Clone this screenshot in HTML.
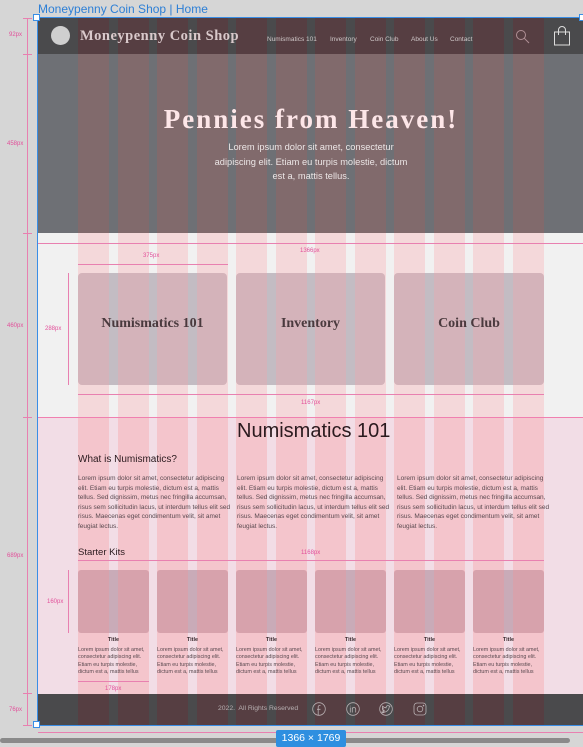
<!DOCTYPE html>
<html><head><meta charset="utf-8">
<style>
*{margin:0;padding:0;box-sizing:border-box}
body{width:583px;height:747px;overflow:hidden;background:#d6d6d6;position:relative;font-family:"Liberation Sans",sans-serif}
.a{position:absolute}
.serif{font-family:"Liberation Serif",serif;font-weight:bold}
.t{position:absolute;white-space:nowrap}
.m{color:#e2509a;font-size:6px;position:absolute}
.cols{position:absolute;left:0;top:0;width:583px;height:100%;pointer-events:none}
.cols div{position:absolute;top:0;height:100%;width:31px}
.para{position:absolute;width:154px;font-size:6.5px;line-height:9.6px;color:#5a4a50}
.kit{position:absolute;top:570px;width:71px;height:63px;background:#c9abb8;border-radius:3px}
.kt{position:absolute;top:637px;width:71px;text-align:center;font-size:5.5px;font-weight:bold;color:#3a2a2e}
.kp{position:absolute;top:647px;width:76px;font-size:5.4px;line-height:7.3px;color:#5a4a50}
</style></head><body>

<div class="t" style="left:38px;top:2px;font-size:12px;color:#2d7fd6">Moneypenny Coin Shop | Home</div>

<div class="a" style="left:38px;top:18px;width:545px;height:36px;background:#4a4a4c"></div>
<div class="a" style="left:38px;top:54px;width:545px;height:179px;background:#6e7075"></div>
<div class="a" style="left:38px;top:233px;width:545px;height:184px;background:#f1f1f1"></div>
<div class="a" style="left:38px;top:417px;width:545px;height:277px;background:#f2dde6"></div>
<div class="a" style="left:38px;top:694px;width:545px;height:31px;background:#4a4a4c"></div>

<div class="a" style="left:78px;top:273px;width:149px;height:112px;background:#c3bcc3;border-radius:4px"></div>
<div class="a" style="left:236px;top:273px;width:149px;height:112px;background:#c3bcc3;border-radius:4px"></div>
<div class="a" style="left:394px;top:273px;width:150px;height:112px;background:#c3bcc3;border-radius:4px"></div>

<div class="kit" style="left:78px"></div><div class="kit" style="left:157px"></div><div class="kit" style="left:236px"></div>
<div class="kit" style="left:315px"></div><div class="kit" style="left:394px"></div><div class="kit" style="left:473px"></div>

<div class="a" style="left:0;top:18px;width:583px;height:36px;overflow:hidden"><div class="cols" id="c1"></div></div>
<div class="a" style="left:0;top:54px;width:583px;height:179px;overflow:hidden"><div class="cols" id="c2"></div></div>
<div class="a" style="left:0;top:233px;width:583px;height:184px;overflow:hidden"><div class="cols" id="c3"></div></div>
<div class="a" style="left:0;top:417px;width:583px;height:277px;overflow:hidden"><div class="cols" id="c4"></div></div>
<div class="a" style="left:0;top:694px;width:583px;height:31px;overflow:hidden"><div class="cols" id="c5"></div></div>

<div class="a" style="left:51px;top:26px;width:19px;height:19px;border-radius:50%;background:#cfcfcf"></div>
<div class="t serif" style="left:80px;top:28px;font-size:14.5px;color:#d9c9cb;letter-spacing:.5px">Moneypenny Coin Shop</div>
<div class="t" style="left:267px;top:36px;font-size:6.5px;color:#cfc7c8">Numismatics 101</div>
<div class="t" style="left:330px;top:36px;font-size:6.5px;color:#cfc7c8">Inventory</div>
<div class="t" style="left:370px;top:36px;font-size:6.5px;color:#cfc7c8">Coin Club</div>
<div class="t" style="left:411px;top:36px;font-size:6.5px;color:#cfc7c8">About Us</div>
<div class="t" style="left:450px;top:36px;font-size:6.5px;color:#cfc7c8">Contact</div>
<svg class="a" style="left:514px;top:28px" width="18" height="18"><circle cx="7" cy="7" r="4.5" fill="none" stroke="#b09096" stroke-width="1"/><path d="M10.2 10.2L15 15" stroke="#b09096" stroke-width="1"/></svg>
<svg class="a" style="left:552px;top:24px" width="20" height="23"><path d="M2.5 8H17.5L17.5 21H2.5Z" fill="none" stroke="#ddd" stroke-width="1"/><path d="M6.5 11V6a3.5 3.5 0 0 1 7 0V11" fill="none" stroke="#ddd" stroke-width="1"/></svg>

<div class="t serif" style="left:60px;width:502px;text-align:center;top:104px;font-size:27px;color:#fde6e8;letter-spacing:2px">Pennies from Heaven!</div>
<div class="a" style="left:208px;width:206px;top:140px;text-align:center;font-size:9.3px;line-height:14.5px;color:#ece6e6">Lorem ipsum dolor sit amet, consectetur adipiscing elit. Etiam eu turpis molestie, dictum est a, mattis tellus.</div>

<div class="t serif" style="left:78px;width:149px;text-align:center;top:316px;font-size:14px;color:#4a3a3e">Numismatics 101</div>
<div class="t serif" style="left:236px;width:149px;text-align:center;top:316px;font-size:14px;color:#4a3a3e">Inventory</div>
<div class="t serif" style="left:394px;width:150px;text-align:center;top:316px;font-size:14px;color:#4a3a3e">Coin Club</div>

<div class="t" style="left:237px;top:420px;font-size:20px;color:#2a1a1e">Numismatics 101</div>
<div class="t" style="left:78px;top:454px;font-size:10px;color:#2a1a1e">What is Numismatics?</div>
<div class="para" style="left:78px;top:474px">Lorem ipsum dolor sit amet, consectetur adipiscing elit. Etiam eu turpis molestie, dictum est a, mattis tellus. Sed dignissim, metus nec fringilla accumsan, risus sem sollicitudin lacus, ut interdum tellus elit sed risus. Maecenas eget condimentum velit, sit amet feugiat lectus.</div>
<div class="para" style="left:237px;top:474px">Lorem ipsum dolor sit amet, consectetur adipiscing elit. Etiam eu turpis molestie, dictum est a, mattis tellus. Sed dignissim, metus nec fringilla accumsan, risus sem sollicitudin lacus, ut interdum tellus elit sed risus. Maecenas eget condimentum velit, sit amet feugiat lectus.</div>
<div class="para" style="left:397px;top:474px">Lorem ipsum dolor sit amet, consectetur adipiscing elit. Etiam eu turpis molestie, dictum est a, mattis tellus. Sed dignissim, metus nec fringilla accumsan, risus sem sollicitudin lacus, ut interdum tellus elit sed risus. Maecenas eget condimentum velit, sit amet feugiat lectus.</div>
<div class="t" style="left:78px;top:547px;font-size:9.5px;color:#2a1a1e">Starter Kits</div>

<div class="kt" style="left:78px">Title</div><div class="kt" style="left:157px">Title</div><div class="kt" style="left:236px">Title</div><div class="kt" style="left:315px">Title</div><div class="kt" style="left:394px">Title</div><div class="kt" style="left:473px">Title</div>
<div class="kp" style="left:78px">Lorem ipsum dolor sit amet, consectetur adipiscing elit. Etiam eu turpis molestie, dictum est a, mattis tellus</div>
<div class="kp" style="left:157px">Lorem ipsum dolor sit amet, consectetur adipiscing elit. Etiam eu turpis molestie, dictum est a, mattis tellus</div>
<div class="kp" style="left:236px">Lorem ipsum dolor sit amet, consectetur adipiscing elit. Etiam eu turpis molestie, dictum est a, mattis tellus</div>
<div class="kp" style="left:315px">Lorem ipsum dolor sit amet, consectetur adipiscing elit. Etiam eu turpis molestie, dictum est a, mattis tellus</div>
<div class="kp" style="left:394px">Lorem ipsum dolor sit amet, consectetur adipiscing elit. Etiam eu turpis molestie, dictum est a, mattis tellus</div>
<div class="kp" style="left:473px">Lorem ipsum dolor sit amet, consectetur adipiscing elit. Etiam eu turpis molestie, dictum est a, mattis tellus</div>

<div class="t" style="left:218px;top:705px;font-size:6.8px;color:#b8b0b2">2022.&nbsp; All Rights Reserved</div>
<svg class="a" style="left:310px;top:700px" width="120" height="18" fill="none" stroke="#b8b0b2" stroke-width=".8">
<circle cx="9" cy="9" r="6.3"/><path d="M10.5 5.5h-1a1.3 1.3 0 0 0-1.3 1.3V15M7 9.3h3.5"/>
<circle cx="43" cy="9" r="6.3"/><path d="M40.3 7.5V12.5M40.3 5.8v.6M42.3 12.5V7.5M42.3 9.3q0-1.8 1.7-1.8t1.7 1.8V12.5"/>
<circle cx="76" cy="9" r="6.3"/><path d="M72 11.8q3 1 5-.7t2.3-4.3l1-.8-1 .2q-1-1-2.2-.4t-1 2q-2 0-3.5-1.6q-.6 1.6.8 2.7-.7 0-1-.3 0 1.5 1.7 2-.5.2-1 0 .5 1.2 1.8 1.3-1.3 1-2.9.9z"/>
<rect x="104" y="3" width="12" height="12" rx="3"/><circle cx="110" cy="9" r="2.8"/><circle cx="113.5" cy="5.6" r=".4"/>
</svg>

<div class="a" style="left:37px;top:17px;width:1px;height:708px;background:#3a8ee6"></div>
<div class="a" style="left:37px;top:17px;width:546px;height:1px;background:#3a8ee6"></div>
<div class="a" style="left:37px;top:725px;width:546px;height:1px;background:#3a8ee6"></div>
<div class="a" style="left:33px;top:14px;width:7px;height:7px;background:#fff;border:1px solid #3a8ee6"></div>
<div class="a" style="left:579px;top:14px;width:7px;height:7px;background:#fff;border:1px solid #3a8ee6"></div>
<div class="a" style="left:33px;top:721px;width:7px;height:7px;background:#fff;border:1px solid #3a8ee6"></div>

<div class="a" style="left:27px;top:18px;width:1px;height:707px;background:#e880b0"></div>
<div class="a" style="left:23px;top:18px;width:9px;height:1px;background:#e880b0"></div>
<div class="a" style="left:23px;top:54px;width:9px;height:1px;background:#e880b0"></div>
<div class="a" style="left:23px;top:233px;width:9px;height:1px;background:#e880b0"></div>
<div class="a" style="left:23px;top:417px;width:9px;height:1px;background:#e880b0"></div>
<div class="a" style="left:23px;top:693px;width:9px;height:1px;background:#e880b0"></div>
<div class="a" style="left:23px;top:725px;width:9px;height:1px;background:#e880b0"></div>
<div class="m" style="left:9px;top:32px">92px</div>
<div class="m" style="left:7px;top:141px">458px</div>
<div class="m" style="left:7px;top:323px">460px</div>
<div class="m" style="left:7px;top:553px">689px</div>
<div class="m" style="left:9px;top:707px">76px</div>

<div class="a" style="left:38px;top:243px;width:545px;height:1px;background:#e880b0"></div>
<div class="m" style="left:300px;top:248px">1366px</div>
<div class="a" style="left:78px;top:264px;width:150px;height:1px;background:#e880b0"></div>
<div class="m" style="left:143px;top:253px">375px</div>
<div class="a" style="left:68px;top:273px;width:1px;height:112px;background:#e880b0"></div>
<div class="m" style="left:45px;top:326px">288px</div>
<div class="a" style="left:78px;top:394px;width:466px;height:1px;background:#e880b0"></div>
<div class="m" style="left:301px;top:400px">1167px</div>
<div class="a" style="left:38px;top:417px;width:545px;height:1px;background:#f080b0"></div>
<div class="a" style="left:78px;top:560px;width:466px;height:1px;background:#e880b0"></div>
<div class="m" style="left:301px;top:550px">1168px</div>
<div class="a" style="left:68px;top:570px;width:1px;height:63px;background:#e880b0"></div>
<div class="m" style="left:47px;top:599px">160px</div>
<div class="a" style="left:78px;top:681px;width:71px;height:1px;background:#e880b0"></div>
<div class="m" style="left:105px;top:686px">178px</div>

<div class="a" style="left:38px;top:732px;width:545px;height:1px;background:#e880b0"></div>
<div class="a" style="left:0;top:738px;width:570px;height:5px;background:#8a8a8a;border-radius:3px"></div>
<div class="a" style="left:276px;top:730px;width:70px;height:17px;background:#2e8fe0;border-radius:2px;color:#fff;font-size:10.5px;text-align:center;line-height:17px">1366 × 1769</div>

<script>
var cols=[78,118,157,197,236,276,315,355,394,434,473,513];
var cc={c1:"rgba(117,37,43,.3)",c2:"rgba(177,92,90,.3)",c3:"rgba(251,158,164,.3)",c4:"rgba(249,141,147,.3)",c5:"rgba(117,37,43,.3)"};
for(var k in cc){var e=document.getElementById(k);cols.forEach(function(x){var d=document.createElement('div');d.style.left=x+'px';d.style.background=cc[k];e.appendChild(d);});}
</script>
</body></html>
